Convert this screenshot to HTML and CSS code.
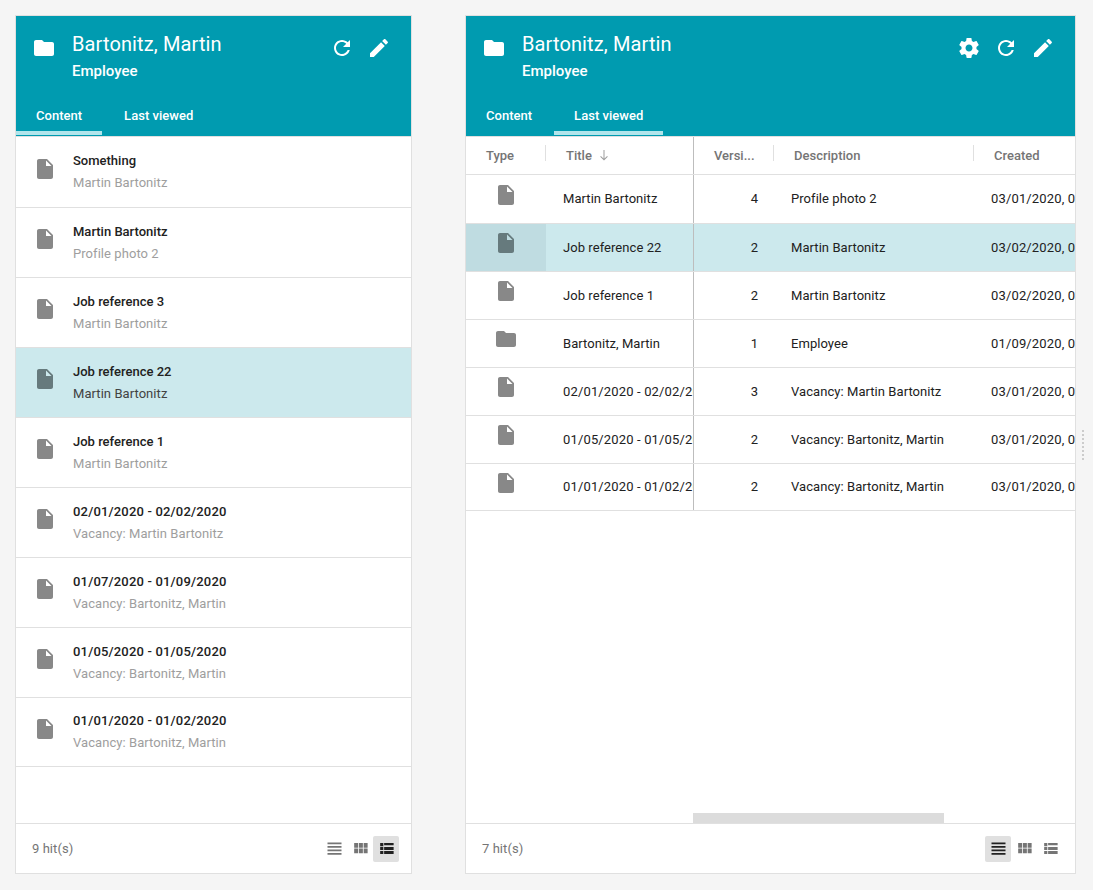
FILE: index.html
```html
<!DOCTYPE html>
<html lang="en">
<head>
  <meta charset="UTF-8">
  <meta name="viewport" content="width=device-width, initial-scale=1.0">
  <title>Bartonitz, Martin</title>
  <link rel="stylesheet" href="styles.css">
</head>
<body>
  <svg class="sprites" width="0" height="0">
    <symbol id="i-folder" viewBox="0 0 24 24"><path d="M10 4H4c-1.1 0-1.99.9-1.99 2L2 18c0 1.1.9 2 2 2h16c1.1 0 2-.9 2-2V8c0-1.1-.9-2-2-2h-8l-2-2z"/></symbol>
    <symbol id="i-file" viewBox="0 0 24 24"><path d="M6 2c-1.1 0-1.99.9-1.99 2L4 20c0 1.1.89 2 1.99 2H18c1.1 0 2-.9 2-2V8l-6-6H6zm7 7V3.5L18.5 9H13z"/></symbol>
    <symbol id="i-refresh" viewBox="0 0 24 24"><path d="M17.65 6.35C16.2 4.9 14.21 4 12 4c-4.42 0-7.99 3.58-7.99 8s3.57 8 7.99 8c3.73 0 6.84-2.55 7.73-6h-2.08c-.82 2.33-3.04 4-5.65 4-3.31 0-6-2.69-6-6s2.69-6 6-6c1.66 0 3.14.69 4.22 1.78L13 11h7V4l-2.35 2.35z"/></symbol>
    <symbol id="i-edit" viewBox="0 0 24 24"><path d="M3 17.25V21h3.75L17.81 9.94l-3.75-3.75L3 17.25zM20.71 7.04c.39-.39.39-1.02 0-1.41l-2.34-2.34c-.39-.39-1.02-.39-1.41 0l-1.83 1.83 3.75 3.75 1.83-1.83z"/></symbol>
    <symbol id="i-settings" viewBox="0 0 24 24"><path d="M19.43 12.98c.04-.32.07-.64.07-.98s-.03-.66-.07-.98l2.11-1.65c.19-.15.24-.42.12-.64l-2-3.46c-.12-.22-.39-.3-.61-.22l-2.49 1c-.52-.4-1.08-.73-1.69-.98l-.38-2.65C14.46 2.18 14.25 2 14 2h-4c-.25 0-.46.18-.49.42l-.38 2.65c-.61.25-1.17.59-1.69.98l-2.49-1c-.23-.09-.49 0-.61.22l-2 3.46c-.13.22-.07.49.12.64l2.11 1.65c-.04.32-.07.65-.07.98s.03.66.07.98l-2.11 1.65c-.19.15-.24.42-.12.64l2 3.46c.12.22.39.3.61.22l2.49-1c.52.4 1.08.73 1.69.98l.38 2.65c.03.24.24.42.49.42h4c.25 0 .46-.18.49-.42l.38-2.65c.61-.25 1.17-.59 1.69-.98l2.49 1c.23.09.49 0 .61-.22l2-3.46c.12-.22.07-.49-.12-.64l-2.11-1.65zM12 15.5c-1.93 0-3.5-1.57-3.5-3.5s1.57-3.5 3.5-3.5 3.5 1.57 3.5 3.5-1.57 3.5-3.5 3.5z"/></symbol>
    <symbol id="i-headline" viewBox="0 0 24 24"><path d="M4 15h16v-2H4v2zm0 4h16v-2H4v2zm0-8h16V9H4v2zm0-6v2h16V5H4z"/></symbol>
    <symbol id="i-module" viewBox="0 0 24 24"><path d="M4 11h5V5H4v6zm0 7h5v-6H4v6zm6 0h5v-6h-5v6zm6 0h5v-6h-5v6zm-6-7h5V5h-5v6zm6-6v6h5V5h-5z"/></symbol>
    <symbol id="i-list" viewBox="0 0 24 24"><path d="M4 14h4v-4H4v4zm0 5h4v-4H4v4zm0-10h4V5H4v4zm5 5h12v-4H9v4zm0 5h12v-4H9v4zm0-15v4h12V5H9z"/></symbol>
    <symbol id="i-down" viewBox="0 0 8 11"><path d="M3.5 0h1v8.6l2.6-2.6.7.7L4 10.5.2 6.7l.7-.7 2.6 2.6z"/></symbol>
  </svg>

  <main class="layout">
    <section class="panel panel-left">
      <header class="panel-head">
        <div class="head-top">
          <svg class="head-folder"><use href="#i-folder"/></svg>
          <div class="head-titles">
            <h1>Bartonitz, Martin</h1>
            <p>Employee</p>
          </div>
          <div class="head-actions">
            <svg><use href="#i-refresh"/></svg>
            <svg><use href="#i-edit"/></svg>
          </div>
        </div>
        <nav class="tabs">
          <a class="tab active">Content</a>
          <a class="tab">Last viewed</a>
        </nav>
      </header>

      <ul class="list">
        <li><svg class="doc"><use href="#i-file"/></svg><div><h3>Something</h3><p>Martin Bartonitz</p></div></li>
        <li><svg class="doc"><use href="#i-file"/></svg><div><h3>Martin Bartonitz</h3><p>Profile photo 2</p></div></li>
        <li><svg class="doc"><use href="#i-file"/></svg><div><h3>Job reference 3</h3><p>Martin Bartonitz</p></div></li>
        <li class="selected"><svg class="doc"><use href="#i-file"/></svg><div><h3>Job reference 22</h3><p>Martin Bartonitz</p></div></li>
        <li><svg class="doc"><use href="#i-file"/></svg><div><h3>Job reference 1</h3><p>Martin Bartonitz</p></div></li>
        <li><svg class="doc"><use href="#i-file"/></svg><div><h3 class="date">02/01/2020 - 02/02/2020</h3><p>Vacancy: Martin Bartonitz</p></div></li>
        <li><svg class="doc"><use href="#i-file"/></svg><div><h3 class="date">01/07/2020 - 01/09/2020</h3><p>Vacancy: Bartonitz, Martin</p></div></li>
        <li><svg class="doc"><use href="#i-file"/></svg><div><h3 class="date">01/05/2020 - 01/05/2020</h3><p>Vacancy: Bartonitz, Martin</p></div></li>
        <li><svg class="doc"><use href="#i-file"/></svg><div><h3 class="date">01/01/2020 - 01/02/2020</h3><p>Vacancy: Bartonitz, Martin</p></div></li>
      </ul>

      <footer class="panel-foot">
        <span>9 hit(s)</span>
        <div class="views">
          <button><svg class="wide"><use href="#i-headline"/></svg></button>
          <button><svg><use href="#i-module"/></svg></button>
          <button class="on"><svg><use href="#i-list"/></svg></button>
        </div>
      </footer>
    </section>

    <section class="panel panel-right">
      <header class="panel-head">
        <div class="head-top">
          <svg class="head-folder"><use href="#i-folder"/></svg>
          <div class="head-titles">
            <h1>Bartonitz, Martin</h1>
            <p>Employee</p>
          </div>
          <div class="head-actions">
            <svg><use href="#i-settings"/></svg>
            <svg><use href="#i-refresh"/></svg>
            <svg><use href="#i-edit"/></svg>
          </div>
        </div>
        <nav class="tabs">
          <a class="tab">Content</a>
          <a class="tab active">Last viewed</a>
        </nav>
      </header>

      <div class="table">
        <div class="row row-head">
          <div class="c c-type">Type</div>
          <div class="c c-title">Title <svg class="sort"><use href="#i-down"/></svg></div>
          <div class="c c-ver">Versi...</div>
          <div class="c c-desc">Description</div>
          <div class="c c-date">Created</div>
        </div>
        <div class="row">
          <div class="c c-type"><svg class="doc"><use href="#i-file"/></svg></div>
          <div class="c c-title">Martin Bartonitz</div>
          <div class="c c-ver">4</div>
          <div class="c c-desc">Profile photo 2</div>
          <div class="c c-date date">03/01/2020, 07</div>
        </div>
        <div class="row selected">
          <div class="c c-type"><svg class="doc"><use href="#i-file"/></svg></div>
          <div class="c c-title">Job reference 22</div>
          <div class="c c-ver">2</div>
          <div class="c c-desc">Martin Bartonitz</div>
          <div class="c c-date date">03/02/2020, 03</div>
        </div>
        <div class="row">
          <div class="c c-type"><svg class="doc"><use href="#i-file"/></svg></div>
          <div class="c c-title">Job reference 1</div>
          <div class="c c-ver">2</div>
          <div class="c c-desc">Martin Bartonitz</div>
          <div class="c c-date date">03/02/2020, 03</div>
        </div>
        <div class="row">
          <div class="c c-type"><svg class="doc"><use href="#i-folder"/></svg></div>
          <div class="c c-title">Bartonitz, Martin</div>
          <div class="c c-ver">1</div>
          <div class="c c-desc">Employee</div>
          <div class="c c-date date">01/09/2020, 07</div>
        </div>
        <div class="row">
          <div class="c c-type"><svg class="doc"><use href="#i-file"/></svg></div>
          <div class="c c-title date">02/01/2020 - 02/02/2020</div>
          <div class="c c-ver">3</div>
          <div class="c c-desc">Vacancy: Martin Bartonitz</div>
          <div class="c c-date date">03/01/2020, 07</div>
        </div>
        <div class="row">
          <div class="c c-type"><svg class="doc"><use href="#i-file"/></svg></div>
          <div class="c c-title date">01/05/2020 - 01/05/2020</div>
          <div class="c c-ver">2</div>
          <div class="c c-desc">Vacancy: Bartonitz, Martin</div>
          <div class="c c-date date">03/01/2020, 07</div>
        </div>
        <div class="row">
          <div class="c c-type"><svg class="doc"><use href="#i-file"/></svg></div>
          <div class="c c-title date">01/01/2020 - 01/02/2020</div>
          <div class="c c-ver">2</div>
          <div class="c c-desc">Vacancy: Bartonitz, Martin</div>
          <div class="c c-date date">03/01/2020, 07</div>
        </div>
        <div class="scrollbar"><div class="thumb"></div></div>
      </div>

      <footer class="panel-foot">
        <span>7 hit(s)</span>
        <div class="views">
          <button class="on"><svg class="wide"><use href="#i-headline"/></svg></button>
          <button><svg><use href="#i-module"/></svg></button>
          <button><svg><use href="#i-list"/></svg></button>
        </div>
      </footer>
    </section>

    <div class="grip"></div>
  </main>
</body>
</html>
```

FILE: styles.css
```css
* {
  margin: 0;
  padding: 0;
  box-sizing: border-box;
}

body {
  background-color: #f5f5f5;
  font-family: Roboto, "Liberation Sans", sans-serif;
  font-size: 13px;
  letter-spacing: .06px;
  color: #212121;
  overflow: hidden;
}

.sprites {
  display: block;
  height: 0;
}

.layout {
  display: flex;
  height: 890px;
  padding: 15px 0 16px 15px;
}

.panel {
  display: flex;
  flex-direction: column;
  background-color: #fff;
  border: 1px solid #e0e0e0;
}

.panel-left {
  width: 397px;
  margin-right: 53px;
}

.panel-right {
  width: 611px;
}

/* header */
.panel-head {
  height: 121px;
  flex-shrink: 0;
  background-color: #009bb0;
  border-bottom: 1px solid #e0e0e0;
  color: #fff;
  display: flex;
  flex-direction: column;
  justify-content: space-between;
}

.head-top {
  display: flex;
  padding: 15px 20px 0 16px;
}

.head-folder {
  width: 24px;
  height: 24px;
  margin-top: 5px;
  flex-shrink: 0;
  fill: #fff;
}

.head-titles {
  margin-left: 16px;
  flex: 1;
}

.head-titles h1 {
  font-size: 20px;
  font-weight: 400;
  line-height: 26px;
  letter-spacing: .12px;
}

.head-titles p {
  font-size: 15px;
  font-weight: 500;
  line-height: 20px;
  margin-top: 4px;
  letter-spacing: 0;
}

.head-actions {
  display: flex;
  gap: 13px;
  margin-top: 5px;
}

.head-actions svg {
  width: 24px;
  height: 24px;
  fill: #fff;
}

.tabs {
  display: flex;
  gap: 2px;
  margin-bottom: 1px;
}

.tab {
  height: 31px;
  padding: 0 20px;
  line-height: 23px;
  font-size: 13px;
  font-weight: 500;
  letter-spacing: .02px;
  color: #fff;
  border-bottom: 4px solid transparent;
}

.tab.active {
  border-bottom-color: #b2e5eb;
}

/* list view */
.list {
  flex: 1;
  list-style: none;
}

.list li {
  height: 70px;
  display: flex;
  padding: 20px 0 0 17px;
  border-bottom: 1px solid #e0e0e0;
}

.list li:first-child {
  height: 71px;
}

.list li:last-child {
  height: 69px;
  padding-top: 19px;
}

.list .doc {
  margin: -1px 16px 0 0;
}

.list li:first-child .doc,
.list li:last-child .doc {
  margin-top: 0;
}

.list h3 {
  font-size: 13px;
  font-weight: 500;
  line-height: 16px;
  margin-top: -4px;
  letter-spacing: 0;
}

.list p {
  color: #9e9e9e;
  line-height: 16px;
  margin-top: 6px;
}

.list .date {
  letter-spacing: .18px;
}

.doc {
  width: 24px;
  height: 24px;
  flex-shrink: 0;
  fill: #888;
}

.selected {
  background-color: #cce9ed;
}

.list .selected p {
  color: #424242;
}

.selected .doc {
  fill: #667a7d;
}

/* table view */
.table {
  flex: 1;
  display: flex;
  flex-direction: column;
  overflow: hidden;
}

.row {
  display: grid;
  grid-template-columns: 80px 148px 80px 200px 200px;
  height: 48px;
  flex-shrink: 0;
  border-bottom: 1px solid #e0e0e0;
}

.row-head {
  height: 38px;
  color: #757575;
  font-weight: 500;
  font-size: 13px;
  letter-spacing: 0;
}

.row-head + .row {
  height: 49px;
}

.row-head + .row .c {
  padding-bottom: 1px;
}

.row:nth-last-child(2) {
  height: 47px;
}

.row:nth-last-child(2) .c {
  padding-bottom: 1px;
}

.c {
  display: flex;
  align-items: center;
  overflow: hidden;
  white-space: nowrap;
  padding-left: 17px;
}

.c-title {
  border-right: 1px solid #bdbdbd;
}

.c-ver {
  justify-content: flex-end;
  padding: 0 16px 0 0;
}

.row .date {
  letter-spacing: .15px;
}

.row:not(.row-head) .c-type {
  justify-content: center;
  align-items: flex-start;
  padding: 7px 0 0;
}

.row-head + .row:not(.row-head) .c-type {
  padding-top: 8px;
}

.row.selected .c-type {
  background-color: #bfdce1;
}

.row-head .c {
  padding-left: 20px;
  position: relative;
}

.row-head .c-type::after,
.row-head .c-ver::after,
.row-head .c-desc::after {
  content: "";
  position: absolute;
  right: 0;
  top: 8px;
  height: 16px;
  border-right: 1px solid #e0e0e0;
}

.row-head .c-ver {
  justify-content: flex-start;
  padding-left: 20px;
}

.sort {
  width: 8px;
  height: 11px;
  margin-left: 8px;
  fill: #9e9e9e;
}

.scrollbar {
  margin-top: auto;
  padding-left: 227px;
}

.thumb {
  width: 251px;
  height: 10px;
  background-color: #dcdcdc;
}

/* footer */
.panel-foot {
  height: 50px;
  flex-shrink: 0;
  display: flex;
  align-items: center;
  justify-content: space-between;
  padding: 0 12px 0 16px;
  border-top: 1px solid #e0e0e0;
  color: #757575;
}

.views {
  display: flex;
}

.views button {
  width: 26px;
  height: 26px;
  display: flex;
  align-items: center;
  justify-content: center;
  border: 0;
  border-radius: 2px;
  background: none;
}

.views svg {
  width: 19px;
  height: 19px;
  fill: #757575;
}

.views svg.wide {
  width: 21px;
  height: 21px;
}

.views .on {
  background-color: #e0e0e0;
}

.views .on svg {
  fill: #212121;
}

.grip {
  align-self: flex-start;
  width: 2px;
  height: 30px;
  margin: 415px 0 0 6px;
  background-image: repeating-linear-gradient(#ccc 0 2px, transparent 2px 4px);
}
```
